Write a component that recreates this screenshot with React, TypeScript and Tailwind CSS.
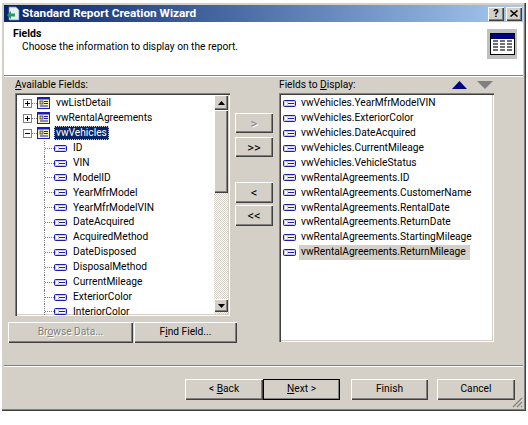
import React from 'react';

const raised = 'bg-[#d4d0c8] shadow-[inset_1px_1px_0_#ffffff,inset_-1px_-1px_0_#404040,inset_-2px_-2px_0_#808080]';
const sunken = 'bg-white shadow-[inset_1px_1px_0_#808080,inset_2px_2px_0_#404040,inset_-1px_-1px_0_#ffffff,inset_-2px_-2px_0_#d4d0c8]';

const treeFields = [
    'ID', 'VIN', 'ModelID', 'YearMfrModel', 'YearMfrModelVIN', 'DateAcquired', 'AcquiredMethod',
    'DateDisposed', 'DisposalMethod', 'CurrentMileage', 'ExteriorColor', 'InteriorColor',
];

const displayFields = [
    'vwVehicles.YearMfrModelVIN', 'vwVehicles.ExteriorColor', 'vwVehicles.DateAcquired',
    'vwVehicles.CurrentMileage', 'vwVehicles.VehicleStatus', 'vwRentalAgreements.ID',
    'vwRentalAgreements.CustomerName', 'vwRentalAgreements.RentalDate', 'vwRentalAgreements.ReturnDate',
    'vwRentalAgreements.StartingMileage', 'vwRentalAgreements.ReturnMileage',
];

const FieldIcon = () => (
    <svg width="13" height="7" viewBox="0 0 13 7" className="shrink-0">
        <rect x="0.5" y="0.5" width="12" height="6" rx="1" fill="#c8c8f0" stroke="#1c1ca8" />
        <rect x="2" y="2" width="2" height="3" fill="#ffffff" />
        <rect x="5" y="2" width="6" height="3" fill="#ffffff" />
        <rect x="5" y="3" width="6" height="1" fill="#1c1ca8" />
    </svg>
);

const TableIcon = () => (
    <svg width="13" height="12" viewBox="0 0 13 12" className="shrink-0">
        <rect x="0.5" y="0.5" width="12" height="11" fill="#f4f4c0" stroke="#1c1cb0" />
        <rect x="1" y="1" width="11" height="1.5" fill="#1c1cb0" />
        <rect x="3" y="4" width="3" height="3" fill="#f0d020" stroke="#1c1cb0" strokeWidth="0.7" />
        <rect x="7" y="4" width="4" height="1" fill="#1c1cb0" />
        <rect x="7" y="6" width="4" height="1" fill="#1c1cb0" />
        <rect x="3" y="8.5" width="8" height="1" fill="#1c1cb0" />
    </svg>
);

const Expander = ({ open }: { open?: boolean }) => (
    <svg width="14" height="9" viewBox="0 0 14 9" className="shrink-0">
        <rect x="0.5" y="0.5" width="8" height="8" fill="#ffffff" stroke="#808080" />
        <rect x="2" y="4" width="5" height="1" fill="#000000" />
        {!open && <rect x="4" y="2" width="1" height="5" fill="#000000" />}
        <path d="M9 4.5h5" stroke="#808080" strokeDasharray="1 1" />
    </svg>
);

const Arrow = ({ down }: { down?: boolean }) => (
    <svg width="7" height="4" viewBox="0 0 7 4">
        <path d={down ? 'M0 0h7L3.5 4z' : 'M3.5 0L7 4H0z'} fill="#000000" />
    </svg>
);

const Button = ({ className, children, disabled }: { className: string; children: React.ReactNode; disabled?: boolean }) => (
    <div className={`flex items-center justify-center ${raised} ${disabled ? 'text-[#808080] [text-shadow:1px_1px_0_#ffffff]' : 'text-black'} ${className}`}>
        <span>{children}</span>
    </div>
);

export default function App() {
    return (
        <div className="h-[425px] w-[528px] overflow-hidden bg-white pl-px pt-0.5 font-['Roboto',sans-serif] text-[10.2px] leading-none text-black">
            <div className="flex h-[409px] w-[525px] flex-col bg-[#d4d0c8] p-[3px] shadow-[inset_1px_1px_0_#ffffff,inset_-1px_-1px_0_#404040,inset_-2px_-2px_0_#808080]">
                {/* title bar */}
                <div className="flex h-[17px] shrink-0 items-center bg-gradient-to-r from-[#0a246a] to-[#a6caf0] pl-0.5 pr-px">
                    <svg width="15" height="15" viewBox="0 0 15 15" className="shrink-0">
                        <path d="M3 1h7l3 3v10H3z" fill="#e8eef8" stroke="#6c86b8" strokeWidth="0.7" />
                        <path d="M1 9l4-4v2.5h4v3H5V13z" fill="#20a050" />
                    </svg>
                    <span className="ml-px flex-1 text-[11.8px] font-bold text-white">Standard Report Creation Wizard</span>
                    <div className={`flex h-3.5 w-4 items-center justify-center text-[11px] font-bold ${raised}`}>?</div>
                    <div className={`ml-0.5 flex h-3.5 w-4 items-center justify-center ${raised}`}>
                        <svg width="8" height="7" viewBox="0 0 8 7">
                            <path d="M0.5 0.5L7.5 6.5M7.5 0.5L0.5 6.5" stroke="#000000" strokeWidth="1.5" />
                        </svg>
                    </div>
                </div>

                {/* header */}
                <div className="flex h-[54px] shrink-0 justify-between border-b border-b-[#808080] bg-white pl-[9px] pr-1.5 pt-[5px]">
                    <div>
                        <div className="h-[13px] text-[10.5px] font-bold leading-[13px]">Fields</div>
                        <div className="ml-[9px] leading-[13px]">Choose the information to display on the report.</div>
                    </div>
                    <div className="mt-0.5 flex h-[30px] w-[30px] items-center justify-center bg-[#c0c0c0]">
                        <svg width="25" height="22" viewBox="0 0 25 22">
                            <rect x="0.5" y="0.5" width="24" height="21" fill="#ffffff" stroke="#000000" />
                            <rect x="1" y="1" width="23" height="5" fill="#000080" />
                            <path d="M3 8h5M10 8h5M17 8h5M3 11h5M10 11h5M17 11h5M3 14h5M10 14h5M17 14h5M3 17h5M10 17h5M17 17h5" stroke="#707070" strokeWidth="2" />
                        </svg>
                    </div>
                </div>

                {/* body */}
                <div className="flex h-[290px] shrink-0 border-b border-t border-b-[#808080] border-t-white pl-[11px]">
                    <div className="w-[215px] shrink-0">
                        <div className="flex h-[16px] items-center"><span><u>A</u>vailable Fields:</span></div>
                        <div className={`flex h-[223px] p-0.5 ${sunken}`}>
                            <div className="relative -mb-0.5 flex-1 overflow-hidden pl-[5px] pt-px">
                                <div className="flex h-[14.9px] items-center pl-px"><Expander /><TableIcon /><span className="ml-1.5">vwListDetail</span></div>
                                <div className="flex h-[14.9px] items-center pl-px"><Expander /><TableIcon /><span className="ml-1.5">vwRentalAgreements</span></div>
                                <div className="flex h-[14.9px] items-center pl-px"><Expander open /><TableIcon /><span className="ml-1 bg-[#0a246a] px-0.5 py-[2px] text-white outline-1 outline-dotted outline-[#d4d0c8] -outline-offset-1">vwVehicles</span></div>
                                {treeFields.map((name) => (
                                    <div key={name} className="ml-[22px] flex h-[14.9px] items-center border-l border-dotted border-l-[#808080]">
                                        <span className="w-[9px] shrink-0 border-t border-dotted border-t-[#808080]" />
                                        <FieldIcon />
                                        <span className="ml-1.5">{name}</span>
                                    </div>
                                ))}
                            </div>
                            {/* scrollbar */}
                            <div className="flex w-[14px] shrink-0 flex-col bg-[repeating-conic-gradient(#d4d0c8_0%_25%,#ffffff_0%_50%)] bg-[length:2px_2px]">
                                <div className={`flex h-[15px] shrink-0 items-center justify-center ${raised}`}><Arrow /></div>
                                <div className={`h-[83px] shrink-0 ${raised}`} />
                                <div className="flex-1" />
                                <div className={`mb-0.5 flex h-[13px] shrink-0 items-center justify-center ${raised}`}><Arrow down /></div>
                            </div>
                        </div>
                        <div className="ml-[-7px] mt-1.5 flex w-[229px] gap-px">
                            <Button disabled className="h-[21px] w-[125px]">Br<u>o</u>wse Data...</Button>
                            <Button className="h-[21px] w-[103px]">F<u>i</u>nd Field...</Button>
                        </div>
                    </div>

                    <div className="ml-[5px] flex w-[38px] shrink-0 flex-col pt-9">
                        <Button disabled className="h-5 text-[13px]">&gt;</Button>
                        <Button className="mt-1 h-5 text-[13px]">&gt;&gt;</Button>
                        <Button className="mt-[25px] h-[21px] text-[13px]">&lt;</Button>
                        <Button className="mt-0.5 h-[21px] text-[13px]">&lt;&lt;</Button>
                    </div>

                    <div className="ml-1.5 w-[215px] shrink-0">
                        <div className="flex h-[16px] items-center justify-between">
                            <span>Fields to <u>D</u>isplay:</span>
                            <div className="flex items-center gap-2.5">
                                <svg width="15" height="8" viewBox="0 0 15 8"><path d="M7.5 0L15 8H0z" fill="#000080" /></svg>
                                <svg width="16" height="8" viewBox="0 0 16 8" className="mr-px"><path d="M0 0h16L8 8z" fill="#808080" /></svg>
                            </div>
                        </div>
                        <div className={`h-[249px] p-0.5 pl-1 pt-[3px] ${sunken}`}>
                            {displayFields.map((name, i) => (
                                <div key={name} className="flex h-[14.9px] items-center">
                                    <FieldIcon />
                                    <span className={`ml-[3px] flex h-[15px] items-center px-0.5 ${i === displayFields.length - 1 ? 'w-[171px] bg-[#d4d0c8]' : ''}`}>{name}</span>
                                </div>
                            ))}
                        </div>
                    </div>
                </div>

                {/* footer */}
                <div className="relative flex flex-1 items-start border-t border-t-white pl-[181px] pt-3">
                    <Button className="h-[21px] w-[78px]">&lt; <u>B</u>ack</Button>
                    <Button className="h-[21px] w-[77px] outline outline-1 outline-black -outline-offset-1">
                        <u>N</u>ext &gt;
                    </Button>
                    <Button className="ml-[11px] h-[21px] w-[77px]">Finish</Button>
                    <Button className="ml-[9px] h-[21px] w-[78px]">Cancel</Button>
                    <svg width="11" height="11" viewBox="0 0 11 11" className="absolute bottom-0 right-0">
                        <path d="M10 1L1 10M10 5L5 10M10 9L9 10" stroke="#808080" strokeWidth="1.2" />
                    </svg>
                </div>
            </div>
        </div>
    );
}
